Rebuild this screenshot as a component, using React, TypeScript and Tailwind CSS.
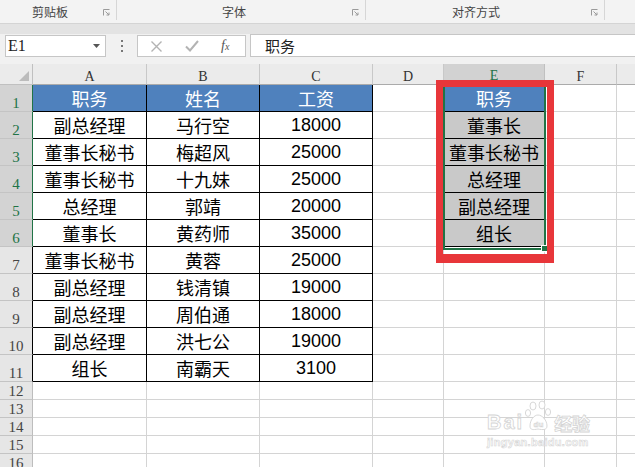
import React from 'react';

const CJK = "font-['Noto_Sans_CJK_SC',sans-serif]";
const SONG = "font-['Liberation_Serif',serif]";

type Col = { key: string; label: string; w: string };

const COLS: Col[] = [
  { key: 'A', label: 'A', w: 'w-[114px]' },
  { key: 'B', label: 'B', w: 'w-[113px]' },
  { key: 'C', label: 'C', w: 'w-[113px]' },
  { key: 'D', label: 'D', w: 'w-[71px]' },
  { key: 'E', label: 'E', w: 'w-[101px]' },
  { key: 'F', label: 'F', w: 'w-[72px]' },
  { key: 'G', label: '', w: 'w-[40px]' },
];

const TABLE: [string, string, string][] = [
  ['职务', '姓名', '工资'],
  ['副总经理', '马行空', '18000'],
  ['董事长秘书', '梅超风', '25000'],
  ['董事长秘书', '十九妹', '25000'],
  ['总经理', '郭靖', '20000'],
  ['董事长', '黄药师', '35000'],
  ['董事长秘书', '黄蓉', '25000'],
  ['副总经理', '钱清镇', '19000'],
  ['副总经理', '周伯通', '18000'],
  ['副总经理', '洪七公', '19000'],
  ['组长', '南霸天', '3100'],
];

const LIST = ['职务', '董事长', '董事长秘书', '总经理', '副总经理', '组长'];

const Launcher = () => (
  <svg width="7" height="7" viewBox="0 0 7 7" className="shrink-0">
    <path d="M0.5 6.5V0.5H6.5" fill="none" stroke="#9a9a9a" strokeWidth="1" />
    <path d="M2.5 2.5L6 6M6 3.5V6H3.5" fill="none" stroke="#9a9a9a" strokeWidth="1" />
  </svg>
);

const Ribbon = () => (
  <div className={`flex h-[24px] bg-[#f3f3f3] border-b border-[#d4d4d4] text-[12px] text-[#444] ${CJK}`}>
    <div className="w-[117px] h-[20px] flex items-center border-r border-[#d6d6d6] pl-[32px] pr-[6px] pt-[4px]">
      <span className="flex-1 leading-none">剪贴板</span>
      <Launcher />
    </div>
    <div className="w-[249px] h-[20px] flex items-center border-r border-[#d6d6d6] pr-[6px] pt-[4px]">
      <span className="flex-1 pl-[105px] leading-none">字体</span>
      <Launcher />
    </div>
    <div className="w-[239px] h-[20px] flex items-center border-r border-[#d6d6d6] pr-[6px] pt-[4px]">
      <span className="flex-1 pl-[86px] leading-none">对齐方式</span>
      <Launcher />
    </div>
  </div>
);

const FormulaBar = () => (
  <div className="bg-[#ebebeb]">
    <div className="h-[10px] bg-[#e3e3e3]" />
    <div className="h-[30px] flex items-start bg-[#f1f1f1]">
      <div className="ml-[5px] mt-[1px] w-[101px] h-[22px] bg-white border border-[#c6c6c6] flex items-center justify-between pl-[2px] pr-[5px]">
        <span className={`${SONG} text-[16px] leading-none text-[#222]`}>E1</span>
        <svg width="7" height="4" viewBox="0 0 7 4">
          <path d="M0 0H7L3.5 4Z" fill="#555" />
        </svg>
      </div>
      <div className="w-[31px] h-[23px] flex flex-col items-center justify-center gap-[3px]">
        <span className="w-[2px] h-[2px] bg-[#777]" />
        <span className="w-[2px] h-[2px] bg-[#777]" />
        <span className="w-[2px] h-[2px] bg-[#777]" />
      </div>
      <div className="mt-[1px] w-[109px] h-[22px] bg-white border border-[#c6c6c6] flex items-center pl-[12px]">
        <svg width="13" height="13" viewBox="0 0 13 13" className="mr-[22px]">
          <path d="M1.5 1.5L11.5 11.5M11.5 1.5L1.5 11.5" stroke="#b3b3b3" strokeWidth="1.4" />
        </svg>
        <svg width="14" height="12" viewBox="0 0 14 12" className="mr-[22px]">
          <path d="M1 6.5L5 10.5L13 1" fill="none" stroke="#b3b3b3" strokeWidth="2" />
        </svg>
        <span className={`${SONG} italic text-[14px] leading-none text-[#555]`}>
          f<span className="text-[10px]">x</span>
        </span>
      </div>
      <div className="ml-[4px] flex-1 h-[23px] bg-white border-y border-l border-[#c6c6c6] flex items-center pl-[14px]">
        <span className={`${CJK} text-[15px] leading-none text-[#222]`}>职务</span>
      </div>
    </div>
  </div>
);

const ColumnHeader = () => (
  <div className="flex h-[21px] bg-[#ebebeb]">
    <div className="w-[33px] shrink-0 border-r border-b border-[#c0c0c0] flex items-end justify-end pr-[3px] pb-[3px]">
      <svg width="10" height="10" viewBox="0 0 10 10">
        <path d="M10 0V10H0Z" fill="#bcbcbc" />
      </svg>
    </div>
    {COLS.map((c) => {
      const sel = c.key === 'E';
      return (
        <div
          key={c.key}
          className={`${c.w} shrink-0 flex items-end justify-center border-r ${SONG} text-[14px] leading-none ${
            sel
              ? 'bg-[#d2d2d2] text-[#217346] border-[#c0c0c0] border-b-2 border-b-[#217346]'
              : 'text-[#333] border-[#c8c8c8] border-b border-b-[#ababab]'
          }`}
        >
          {c.label}
        </div>
      );
    })}
  </div>
);

const TableRow = ({ n, row }: { n: number; row: [string, string, string] | null }) => {
  const tall = n <= 11;
  const selected = n <= 6;
  const head = n === 1;
  const h = tall ? 'h-[27px]' : 'h-[18px]';
  const tableCell = `border-r border-b border-black flex items-center justify-center text-[18px] leading-none ${
    head ? 'bg-[#4f81bd] text-white' : 'bg-white text-black'
  }`;
  const grid = 'border-r border-b border-[#d4d4d4] bg-white';
  const listItem = selected ? LIST[n - 1] : null;
  return (
    <div className={`flex ${h}`}>
      <div
        className={`w-[33px] shrink-0 flex items-end justify-center border-b border-[#c4c4c4] border-r ${SONG} text-[15px] leading-none ${
          selected
            ? 'bg-[#d3d3d3] text-[#217346] border-r-[#217346]'
            : tall
              ? 'bg-[#e6e6e6] text-[#444] border-r-black'
              : 'bg-[#e6e6e6] text-[#444] border-r-[#bdbdbd]'
        }`}
      >
        {n}
      </div>
      {row ? (
        <>
          <div className={`w-[114px] shrink-0 ${tableCell} ${CJK}`}>{row[0]}</div>
          <div className={`w-[113px] shrink-0 ${tableCell} ${CJK}`}>{row[1]}</div>
          <div
            className={`w-[113px] shrink-0 ${tableCell} ${
              head ? CJK : "font-['Liberation_Sans',sans-serif]"
            }`}
          >
            {row[2]}
          </div>
        </>
      ) : (
        <>
          <div className={`w-[114px] shrink-0 ${grid}`} />
          <div className={`w-[113px] shrink-0 ${grid}`} />
          <div className={`w-[113px] shrink-0 ${grid}`} />
        </>
      )}
      <div className={`w-[71px] shrink-0 ${grid}`} />
      {listItem ? (
        <div
          className={`w-[101px] shrink-0 border-r border-[#d4d4d4] border-b border-b-black flex items-center justify-center text-[18px] leading-none ${CJK} ${
            head ? 'bg-[#4f81bd] text-white' : 'bg-[#c9c9c9] text-black'
          }`}
        >
          {listItem}
        </div>
      ) : (
        <div className={`w-[101px] shrink-0 ${grid}`} />
      )}
      <div className={`w-[72px] shrink-0 ${grid}`} />
      <div className={`w-[40px] shrink-0 ${grid}`} />
    </div>
  );
};

const Watermark = () => (
  <div className="absolute left-[487px] top-[396px] w-[115px] flex flex-col items-start pointer-events-none">
    <div className="flex items-end h-[36px]">
      <span className="font-['Liberation_Sans',sans-serif] font-bold text-[20px] tracking-[2px] leading-none text-white [-webkit-text-stroke:0.8px_#d4d4d4]">
        Bai
      </span>
      <svg width="30" height="32" viewBox="0 0 30 32">
        <g fill="white" stroke="#d4d4d4" strokeWidth="0.9">
          <ellipse cx="9" cy="6" rx="3" ry="4" />
          <ellipse cx="18" cy="5" rx="3" ry="4" />
          <ellipse cx="4" cy="13" rx="2.6" ry="3.4" />
          <ellipse cx="24" cy="12" rx="2.6" ry="3.4" />
          <path d="M6 26C6 20 10 15 14 15C18 15 23 20 23 26C23 30 19 30 14 29C9 30 6 30 6 26Z" />
        </g>
        <text x="14.5" y="27" textAnchor="middle" fontSize="8" fontWeight="bold" fill="white" stroke="#d4d4d4" strokeWidth="0.6" fontFamily="Liberation Sans">du</text>
      </svg>
      <span className={`${CJK} font-bold text-[18px] leading-none text-white [-webkit-text-stroke:0.8px_#d4d4d4]`}>
        经验
      </span>
    </div>
    <span className="mt-[5px] font-['Liberation_Sans',sans-serif] font-bold text-[11px] leading-none text-white [-webkit-text-stroke:0.6px_#d6d6d6] tracking-[0.3px]">
      jingyan.baidu.com
    </span>
  </div>
);

export default function App() {
  const rows = Array.from({ length: 16 }, (_, i) => i + 1);
  return (
    <div className="relative w-[635px] h-[467px] overflow-hidden bg-white">
      <Ribbon />
      <FormulaBar />
      <ColumnHeader />
      <div className="flex flex-col">
        {rows.map((n) => (
          <TableRow key={n} n={n} row={n <= 11 ? TABLE[n - 1] : null} />
        ))}
      </div>

      {/* selection of E1:E6 */}
      <div className="absolute left-[443px] top-[85px] w-[103px] h-[165px] border-2 border-[#217346] pointer-events-none" />
      <div className="absolute left-[541px] top-[245px] w-[7px] h-[7px] bg-[#217346] border border-white pointer-events-none" />

      {/* red annotation box */}
      <div className="absolute left-[436px] top-[80px] w-[118px] h-[183px] border-[7px] border-b-[9px] border-[#e8363a] pointer-events-none" />

      <Watermark />
    </div>
  );
}
